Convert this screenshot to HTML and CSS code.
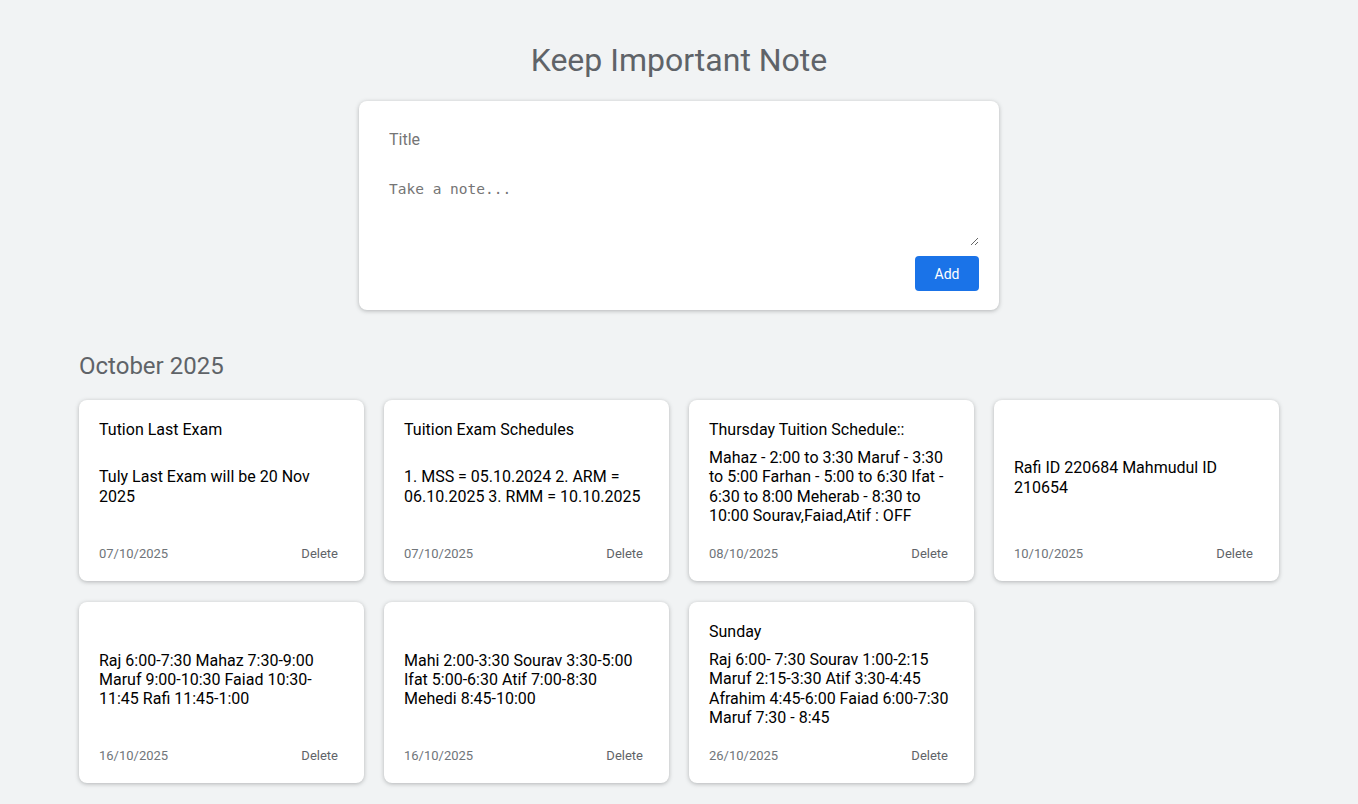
FILE: index.html
```html
<!DOCTYPE html>
<html>
<head>
<meta charset="utf-8">
<title>Keep Important Note</title>
<link rel="stylesheet" href="styles.css">
</head>
<body>
<main class="app">
  <h1 class="app-title">Keep Important Note</h1>
  <form class="composer">
    <input class="composer-title" type="text" placeholder="Title">
    <textarea class="composer-body" placeholder="Take a note..."></textarea>
    <div class="composer-actions">
      <button type="button" class="btn-add">Add</button>
    </div>
  </form>

  <section class="month">
    <h2 class="month-title">October 2025</h2>
    <div class="notes">
      <article class="note">
        <h3 class="note-title">Tution Last Exam</h3>
        <div class="note-body"><p>Tuly Last Exam will be 20 Nov 2025</p></div>
        <footer class="note-footer"><span class="note-date">07/10/2025</span><button class="note-delete">Delete</button></footer>
      </article>
      <article class="note">
        <h3 class="note-title">Tuition Exam Schedules</h3>
        <div class="note-body"><p>1. MSS = 05.10.2024 2. ARM = 06.10.2025 3. RMM = 10.10.2025</p></div>
        <footer class="note-footer"><span class="note-date">07/10/2025</span><button class="note-delete">Delete</button></footer>
      </article>
      <article class="note">
        <h3 class="note-title">Thursday Tuition Schedule::</h3>
        <div class="note-body"><p>Mahaz - 2:00 to 3:30 Maruf - 3:30 to 5:00 Farhan - 5:00 to 6:30 Ifat - 6:30 to 8:00 Meherab - 8:30 to 10:00 Sourav,Faiad,Atif : OFF</p></div>
        <footer class="note-footer"><span class="note-date">08/10/2025</span><button class="note-delete">Delete</button></footer>
      </article>
      <article class="note">
        <h3 class="note-title"></h3>
        <div class="note-body"><p>Rafi ID 220684 Mahmudul ID 210654</p></div>
        <footer class="note-footer"><span class="note-date">10/10/2025</span><button class="note-delete">Delete</button></footer>
      </article>
      <article class="note">
        <h3 class="note-title"></h3>
        <div class="note-body"><p>Raj 6:00-7:30 Mahaz 7:30-9:00 Maruf 9:00-10:30 Faiad 10:30-11:45 Rafi 11:45-1:00</p></div>
        <footer class="note-footer"><span class="note-date">16/10/2025</span><button class="note-delete">Delete</button></footer>
      </article>
      <article class="note">
        <h3 class="note-title"></h3>
        <div class="note-body"><p>Mahi 2:00-3:30 Sourav 3:30-5:00 Ifat 5:00-6:30 Atif 7:00-8:30 Mehedi 8:45-10:00</p></div>
        <footer class="note-footer"><span class="note-date">16/10/2025</span><button class="note-delete">Delete</button></footer>
      </article>
      <article class="note">
        <h3 class="note-title">Sunday</h3>
        <div class="note-body"><p>Raj 6:00- 7:30 Sourav 1:00-2:15 Maruf 2:15-3:30 Atif 3:30-4:45 Afrahim 4:45-6:00 Faiad 6:00-7:30 Maruf 7:30 - 8:45</p></div>
        <footer class="note-footer"><span class="note-date">26/10/2025</span><button class="note-delete">Delete</button></footer>
      </article>
    </div>
  </section>
</main>
</body>
</html>
```
FILE: styles.css
```css
* { box-sizing: border-box; }

html, body {
  margin: 0;
  padding: 0;
  background: #f1f3f4;
  font-family: Roboto, "Liberation Sans", Arial, sans-serif;
  color: #000;
}

.app {
  width: 1200px;
  margin: 0 auto;
  padding: 41px 0 20px;
}

.app-title {
  margin: 0 0 22px;
  text-align: center;
  font-size: 32px;
  line-height: 38px;
  font-weight: 400;
  color: #5f6368;
}

.composer {
  width: 640px;
  margin: 0 auto;
  background: #fff;
  border-radius: 8px;
  box-shadow: 0 1px 4px rgba(60, 64, 67, 0.35);
  padding: 20px 20px 19px;
  display: flex;
  flex-direction: column;
  gap: 10px;
}

.composer-title {
  border: none;
  outline: none;
  padding: 10px;
  font-family: Roboto, "Liberation Sans", Arial, sans-serif;
  font-size: 16px;
  line-height: 18px;
  color: #202124;
}
.composer-title::placeholder { color: #757575; }

.composer-body {
  border: none;
  outline: none;
  padding: 12px 10px 8px;
  height: 77px;
  font-family: "DejaVu Sans Mono", "Liberation Mono", monospace;
  font-size: 14.5px;
  line-height: 17px;
  color: #202124;
  resize: vertical;
}
.composer-body::placeholder { color: #757575; }

.composer-actions {
  display: flex;
  justify-content: flex-end;
}

.btn-add {
  width: 64px;
  height: 35px;
  border: none;
  border-radius: 4px;
  background: #1a73e8;
  color: #fff;
  font-family: Roboto, "Liberation Sans", Arial, sans-serif;
  font-size: 14px;
  font-weight: 400;
  cursor: pointer;
}

.month { margin-top: 42px; }

.month-title {
  margin: 0 0 20px;
  font-size: 24px;
  line-height: 28px;
  font-weight: 400;
  color: #5f6368;
}

.notes {
  display: grid;
  grid-template-columns: repeat(4, 285px);
  gap: 21px 20px;
}

.note {
  height: 181px;
  background: #fff;
  border-radius: 8px;
  box-shadow: 0 1px 4px rgba(60, 64, 67, 0.35);
  padding: 20px 20px 19px;
  display: flex;
  flex-direction: column;
}

.note-title {
  margin: 0 0 8px;
  min-height: 10px;
  font-size: 16px;
  line-height: 19px;
  font-weight: 400;
}

.note-body {
  min-height: 79px;
  display: flex;
  flex-direction: column;
  justify-content: center;
}
.note-body p {
  margin: 0;
  font-size: 16px;
  line-height: 19.3px;
}

.note-footer {
  margin-top: auto;
  display: flex;
  justify-content: space-between;
  align-items: center;
  height: 17px;
}

.note-date {
  font-size: 13px;
  color: #70757a;
}

.note-delete {
  border: none;
  background: transparent;
  padding: 0 6px;
  font-family: Roboto, "Liberation Sans", Arial, sans-serif;
  font-size: 13px;
  color: #5f6368;
  cursor: pointer;
}
```
